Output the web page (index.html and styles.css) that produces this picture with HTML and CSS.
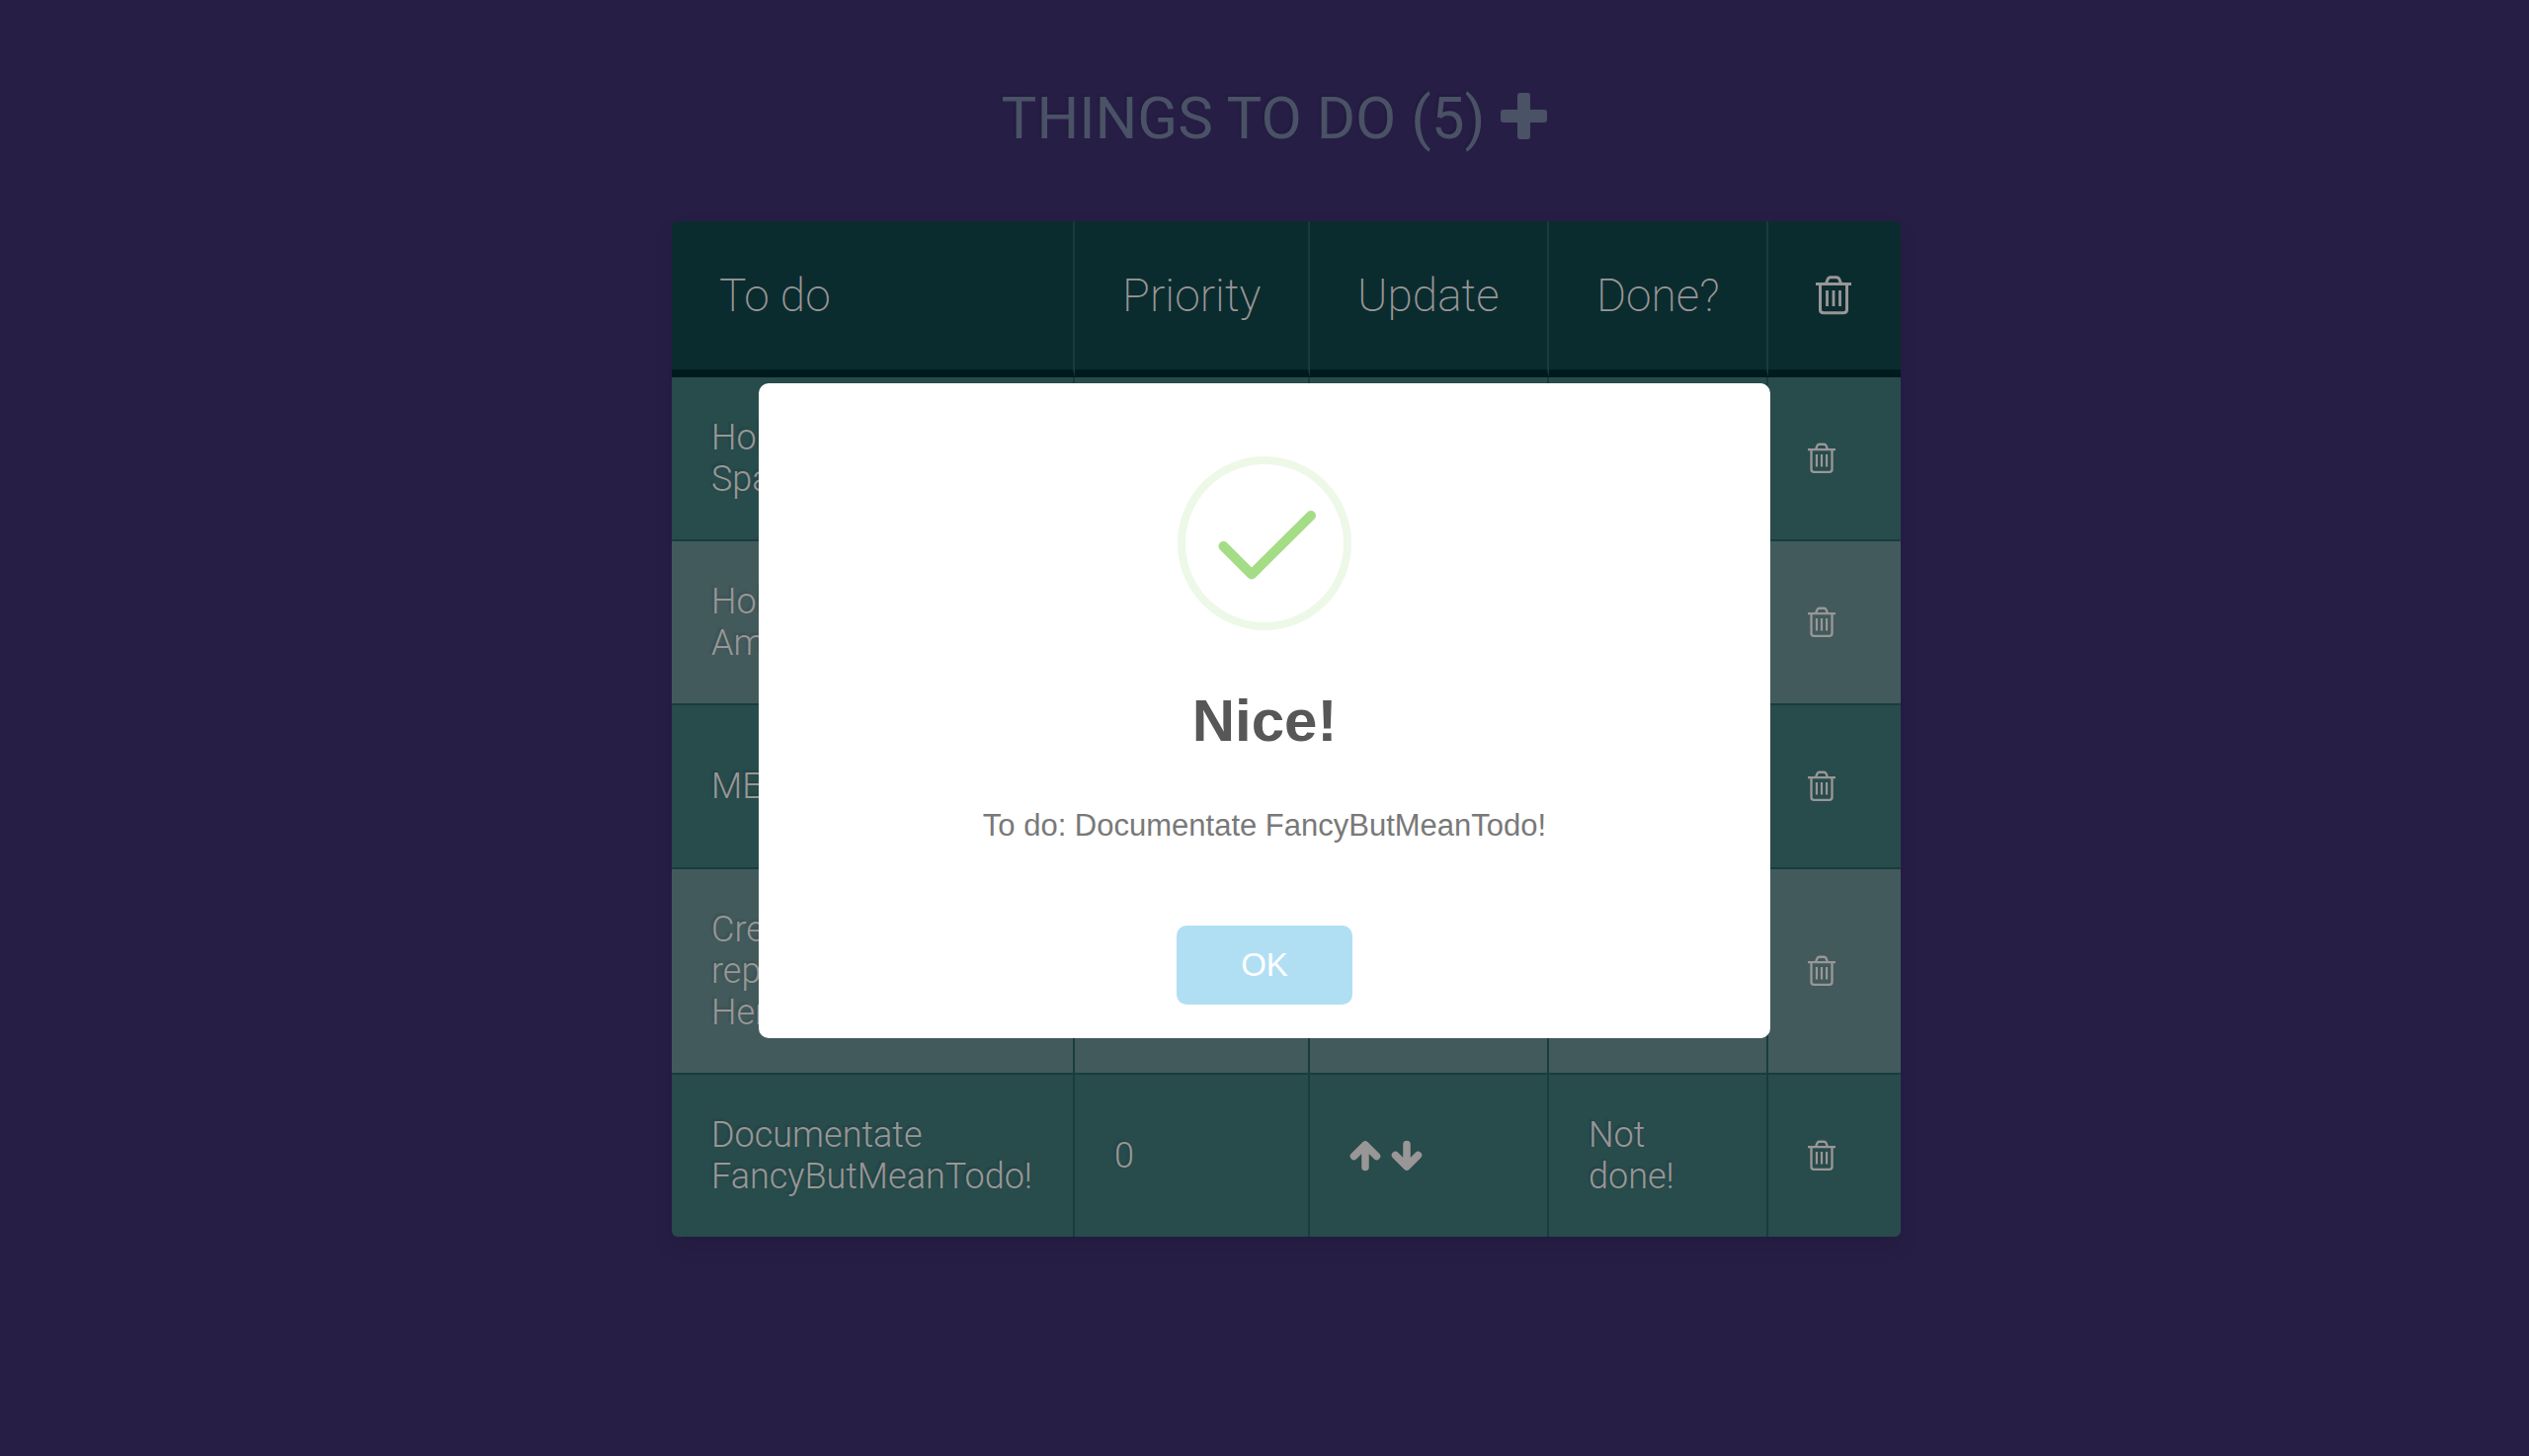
FILE: index.html
```html
<!DOCTYPE html>
<html lang="en">
<head>
<meta charset="utf-8">
<title>Things to do</title>
<link rel="stylesheet" href="styles.css">
</head>
<body>
<svg class="sprite" aria-hidden="true">
  <symbol id="trash" viewBox="0 0 36 40">
    <path d="M0 8.500H36M10.500 8 12 4Q13 1.700 15 1.700H21Q23 1.700 24 4L25.500 8M4.500 8V34.500Q4.500 37.800 8 37.800H28Q31.500 37.800 31.500 34.500V8" fill="none" stroke="currentColor" stroke-width="3"/>
    <path d="M11.500 15V31M18 15V31M24.500 15V31" fill="none" stroke="currentColor" stroke-width="2.800"/>
  </symbol>
  <symbol id="arrow" viewBox="0 0 32 32">
    <path d="M4.500 16.500 16 5 27.500 16.500M16 7V27.500" fill="none" stroke="currentColor" stroke-width="7.500" stroke-linecap="round" stroke-linejoin="round"/>
  </symbol>
</svg>
<main class="page">
  <h3 class="title">Things to do (5)
    <button class="icon-button" type="button" aria-label="Add to do"><svg class="plus" viewBox="0 0 47 47"><path d="M20 0h7a3 3 0 0 1 3 3v14h14a3 3 0 0 1 3 3v7a3 3 0 0 1-3 3H30v14a3 3 0 0 1-3 3h-7a3 3 0 0 1-3-3V30H3a3 3 0 0 1-3-3v-7a3 3 0 0 1 3-3h14V3a3 3 0 0 1 3-3z"/></svg></button>
  </h3>
  <table class="todos">
    <colgroup><col class="col-name"><col class="col-priority"><col class="col-update"><col class="col-done"><col class="col-delete"></colgroup>
    <thead>
      <tr><th>To do</th><th>Priority</th><th>Update</th><th>Done?</th><th><svg class="trash-large" role="img" aria-label="Delete"><use href="#trash"/></svg></th></tr>
    </thead>
    <tbody>
      <tr><td>Holidays in<br>Spain</td><td>0</td><td></td><td>Not done!</td><td><button class="icon-button" type="button" aria-label="Delete"><svg class="trash"><use href="#trash"/></svg></button></td></tr>
      <tr><td>Holidays in<br>America</td><td>0</td><td></td><td>Not done!</td><td><button class="icon-button" type="button" aria-label="Delete"><svg class="trash"><use href="#trash"/></svg></button></td></tr>
      <tr><td>MEAN</td><td>0</td><td></td><td>Not done!</td><td><button class="icon-button" type="button" aria-label="Delete"><svg class="trash"><use href="#trash"/></svg></button></td></tr>
      <tr><td>Create<br>repository on<br>Heroku</td><td>0</td><td></td><td>Not done!</td><td><button class="icon-button" type="button" aria-label="Delete"><svg class="trash"><use href="#trash"/></svg></button></td></tr>
      <tr><td>Documentate FancyButMeanTodo!</td><td>0</td><td><div class="arrows"><button class="icon-button" type="button" aria-label="Raise priority"><svg class="arrow"><use href="#arrow"/></svg></button><button class="icon-button" type="button" aria-label="Lower priority"><svg class="arrow arrow-down"><use href="#arrow"/></svg></button></div></td><td>Not done!</td><td><button class="icon-button" type="button" aria-label="Delete"><svg class="trash"><use href="#trash"/></svg></button></td></tr>
    </tbody>
  </table>
</main>
<div class="overlay">
  <div class="alert" role="dialog" aria-modal="true" aria-labelledby="alert-title">
    <svg class="success" viewBox="0 0 176 176" aria-hidden="true">
      <circle cx="88" cy="88" r="84" fill="none" stroke="#a5dc86" stroke-opacity=".2" stroke-width="8"/>
      <path d="M46.500 91 75 119.500 135 60" fill="none" stroke="#a5dc86" stroke-width="10" stroke-linecap="round" stroke-linejoin="round"/>
    </svg>
    <h2 class="alert-title" id="alert-title">Nice!</h2>
    <p class="alert-text">To do: Documentate FancyButMeanTodo!</p>
    <button class="confirm" type="button">OK</button>
  </div>
</div>
</body>
</html>
```
FILE: styles.css
```css
* { box-sizing: border-box; }

body {
  margin: 0;
  min-height: 100vh;
  background: #271e46;
  color: #999697;
  font-family: Roboto, sans-serif;
}

.sprite { position: absolute; width: 0; height: 0; }

.page {
  display: flex;
  flex-direction: column;
  align-items: center;
  padding: 82px 0 80px 20px;
}

.title {
  display: flex;
  align-items: center;
  gap: 16px;
  margin: 0 0 66px;
  color: #4a5266;
  font-size: 60px;
  font-weight: 400;
  line-height: 76px;
  text-transform: uppercase;
  text-shadow: -2px -2px 2px rgba(0, 0, 0, .1);
}

.icon-button {
  display: block;
  padding: 0;
  border: 0;
  background: none;
  color: inherit;
  cursor: pointer;
}

.icon-button svg { display: block; }
.plus { width: 47px; height: 47px; fill: currentColor; margin-bottom: 6px; }

.todos {
  width: 1244px;
  max-width: 100%;
  margin-left: 24px;
  table-layout: fixed;
  border-spacing: 0;
  border-radius: 6px;
  overflow: hidden;
  box-shadow: 0 10px 20px rgba(0, 0, 0, .1);
}

.col-name { width: 408px; }
.col-priority { width: 238px; }
.col-update { width: 242px; }
.col-done { width: 222px; }
.col-delete { width: 134px; }

th {
  padding: 48px;
  border-right: 2px solid #163c3e;
  border-bottom: 8px solid #001b1f;
  background: #0b2c2e;
  font-size: 46px;
  font-weight: 200;
  line-height: 54px;
  text-align: left;
  vertical-align: middle;
}

td {
  padding: 40px;
  border-right: 2px solid #183d3f;
  border-bottom: 2px solid #183d3f;
  background: #284b4b;
  font-size: 36px;
  font-weight: 300;
  line-height: 42px;
  vertical-align: middle;
  text-shadow: -2px -2px 2px rgba(0, 0, 0, .1);
}

tr:nth-child(even) td { background: #425a5b; }
tr:last-child td { border-bottom: 0; }
th:last-child, td:last-child { border-right: 0; }

.trash-large { display: block; width: 36px; height: 40px; }
.trash { width: 28px; height: 32px; }
.arrows { display: flex; gap: 10px; }
.arrow { width: 32px; height: 32px; }
.arrow-down { transform: rotate(180deg); }

.overlay {
  position: fixed;
  inset: 0;
  display: flex;
  align-items: center;
  justify-content: center;
  padding-bottom: 35px;
}

.alert {
  display: flex;
  flex-direction: column;
  align-items: center;
  width: 40%;
  padding: 74px 34px 34px;
  border-radius: 10px;
  background: #fff;
  font-family: "Liberation Sans", Arial, sans-serif;
  text-align: center;
}

.success { width: 176px; height: 176px; }

.alert-title {
  margin: 52px 0 46px;
  color: #575757;
  font-size: 60px;
  font-weight: 600;
  line-height: 80px;
}

.alert-text {
  margin: 0;
  color: #797979;
  font-size: 31px;
  font-weight: 300;
  line-height: 40px;
}

.confirm {
  width: 178px;
  height: 80px;
  margin-top: 81px;
  border: 0;
  border-radius: 10px;
  background: #b0dff4;
  color: #fff;
  font-family: inherit;
  font-size: 33px;
}
```
